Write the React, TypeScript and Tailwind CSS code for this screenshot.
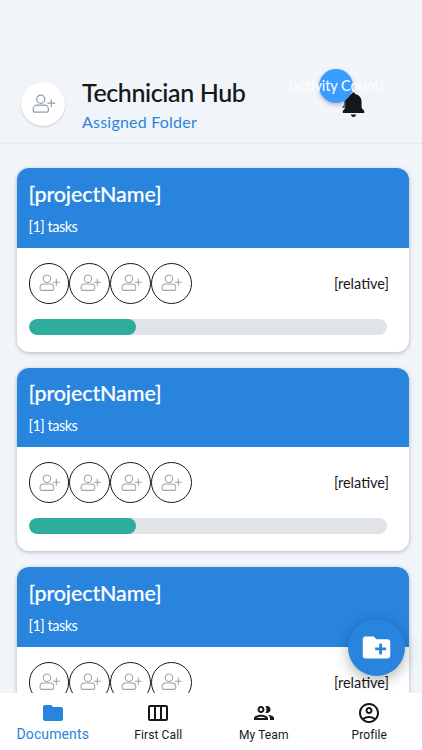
import React from 'react';
import {
    MdCreateNewFolder,
    MdFolder,
    MdOutlineAccountCircle,
    MdOutlineGroup,
    MdOutlineViewWeek,
} from 'react-icons/md';

interface Project {
    id: number;
    name: string;
    tasks: string;
    updated: string;
    progress: number;
}

const projects: Project[] = [1, 2, 3].map((id) => ({
    id,
    name: '[projectName]',
    tasks: '[1] tasks',
    updated: '[relative]',
    progress: 30,
}));

const UserAddIcon: React.FC<{ className: string }> = ({ className }) => (
    <svg viewBox="0 0 24 20" fill="none" stroke="currentColor" strokeWidth="1.2" className={className}>
        <circle cx="8.8" cy="5.3" r="4.1" />
        <path d="M5 11.2h7.6c2.1 0 3.8 1.7 3.8 3.8v1.5c0 1-.7 1.7-1.7 1.7H2.9c-1 0-1.7-.7-1.7-1.7V15c0-2.1 1.7-3.8 3.8-3.8Z" />
        <path d="M19.3 5.2v7.8M15.4 9.1h7.8" />
    </svg>
);

const BellIcon: React.FC<{ className: string }> = ({ className }) => (
    <svg viewBox="0 0 24 26" className={className}>
        <path fill="#62686c" d="M3.5 5h5v11H1.2v-1L3 12.8Z" />
        <path
            fill="currentColor"
            d="M10.9 1.9c0-2 3.2-2 3.2 0 4 .7 6.5 3.9 6.5 8v5.8l2.6 3.2v2H1.8v-2l2.6-3.2V9.9c0-4.1 2.5-7.3 6.5-8Z"
        />
        <path fill="currentColor" d="M9.8 22.5h5.4c-.4 1.6-1.3 2.5-2.7 2.5s-2.3-.9-2.7-2.5Z" />
    </svg>
);

const Header: React.FC = () => (
    <header className="flex h-[144px] shrink-0 items-start border-b border-[#e7eaef] pl-[21px] pt-[82px]">
        <div className="flex h-11 w-11 items-center justify-center rounded-full bg-white pl-[2px] shadow-[0_1px_2px_rgba(0,0,0,0.18)]">
            <UserAddIcon className="h-5 w-6 text-[#929bad]" />
        </div>
        <div className="ml-[17px] -mt-[5px] w-[255px]">
            <h1 className="whitespace-nowrap text-[25px] font-medium leading-[30px] tracking-[-0.38px] text-[#14181b] [-webkit-text-stroke:0.1px_#14181b]">
                Technician Hub
            </h1>
            <p className="mt-1 text-[16px] leading-[22px] tracking-[0.22px] text-[#2984de]">
                Assigned Folder
            </p>
        </div>
        <div className="relative mt-[9px] flex h-7 w-8 items-center justify-center">
            <BellIcon className="h-[26px] w-6 shrink-0 text-[#14181b]" />
            <span className="absolute -left-[18px] -top-[22.5px] flex h-[34px] w-[34px] items-center justify-center whitespace-nowrap rounded-full bg-[#3b9cff] text-[14.5px] tracking-[-0.1px] text-white shadow-[0_2px_4px_rgba(0,0,0,0.25)]">
                [activity Count]
            </span>
        </div>
    </header>
);

const ProjectCard: React.FC<{ project: Project }> = ({ project }) => (
    <article className="h-[183.5px] shrink-0 overflow-hidden rounded-xl bg-white shadow-[0_1px_4px_rgba(0,0,0,0.25)]">
        <div className="h-[79.5px] bg-[#2984de] px-3 pt-[11.5px] text-white">
            <h2 className="text-[21.5px] font-medium leading-7 tracking-[-0.12px] [-webkit-text-stroke:0.15px_white]">
                {project.name}
            </h2>
            <p className="mt-2 text-[14.5px] leading-[22px] tracking-[-0.5px]">{project.tasks}</p>
        </div>
        <div className="flex items-center justify-between pl-3 pr-5 pt-[15px]">
            <div className="flex">
                {[0, 1, 2, 3].map((member) => (
                    <div
                        key={member}
                        className="flex h-[40.8px] w-[40.8px] items-center justify-center rounded-full border border-[#14181b] pl-[2px]"
                    >
                        <UserAddIcon className="h-[18px] w-[21.6px] text-[#9da3aa]" />
                    </div>
                ))}
            </div>
            <span className="pt-px text-[14.5px] text-[#14181b]">{project.updated}</span>
        </div>
        <div className="ml-3 mr-[22px] mt-[15px] h-4 overflow-hidden rounded-full bg-[#e0e3e7]">
            <div className="h-full rounded-full bg-[#2eac9c]" style={{ width: `${project.progress}%` }} />
        </div>
    </article>
);

const tabs = [
    { label: 'Documents', icon: MdFolder, active: true },
    { label: 'First Call', icon: MdOutlineViewWeek, active: false },
    { label: 'My Team', icon: MdOutlineGroup, active: false },
    { label: 'Profile', icon: MdOutlineAccountCircle, active: false },
];

const BottomNav: React.FC = () => (
    <nav className="grid h-[57px] shrink-0 grid-cols-4 bg-white font-[Roboto,sans-serif]">
        {tabs.map(({ label, icon: Icon, active }) => (
            <button
                key={label}
                className={
                    active
                        ? 'flex flex-col items-center pt-2 text-[14px] tracking-[0.12px] text-[#2984de]'
                        : 'flex flex-col items-center pt-2 text-[12px] tracking-[0.1px] text-[#14181b]'
                }
            >
                <Icon className="h-6 w-6 shrink-0" />
                <span className={active ? 'leading-[18px]' : 'leading-5'}>{label}</span>
            </button>
        ))}
    </nav>
);

export default function App() {
    return (
        <div className="relative flex h-[750px] w-[422px] flex-col overflow-hidden bg-[#f1f4f8] font-[Lato,sans-serif]">
            <Header />
            <main className="flex min-h-0 flex-1 flex-col gap-4 overflow-hidden pl-[16.5px] pr-[13px] pt-[24.4px]">
                {projects.map((project) => (
                    <ProjectCard key={project.id} project={project} />
                ))}
            </main>
            <BottomNav />
            <button className="absolute bottom-[74px] right-[17px] flex h-[57px] w-[57px] items-center justify-center rounded-full bg-[#2984de] text-white shadow-[0_4px_14px_rgba(0,0,0,0.3)]">
                <MdCreateNewFolder className="h-[33px] w-[33px]" />
            </button>
        </div>
    );
}
